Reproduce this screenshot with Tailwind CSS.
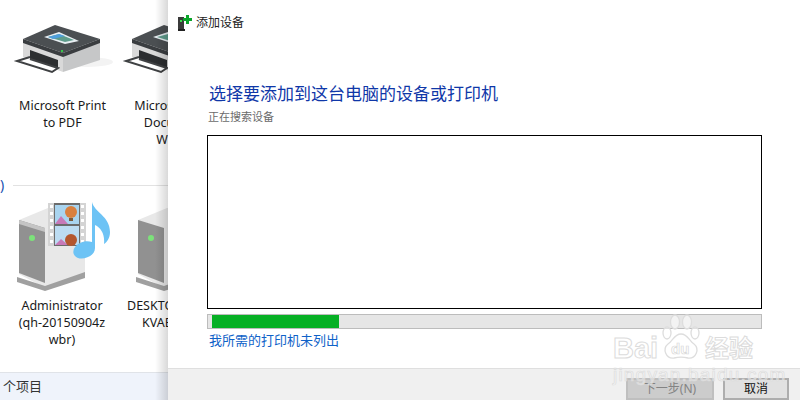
<!DOCTYPE html>
<html lang="zh-CN">
  <head>
    <meta charset="UTF-8" />
    <title>添加设备</title>
    <script src="https://cdn.jsdelivr.net/npm/@tailwindcss/browser@4"></script>
  </head>
  <body class="bg-white overflow-hidden font-['Noto_Sans','Noto_Sans_CJK_SC',sans-serif]">
    <div class="relative flex w-[800px] h-[400px] overflow-hidden">
      <!-- explorer behind the dialog -->
      <div class="relative w-[168px] h-full shrink-0 flex flex-col overflow-hidden text-[12.5px] leading-[17px] text-[#1a1a1a]">
        <div class="flex h-[168px] pt-[24px] gap-[2px] pl-[9px]">
          <div class="w-[107px] shrink-0 flex flex-col items-center text-center">
            <svg class="w-[107px] h-[50px] mb-[23px]" viewBox="0 0 107 50">
              <ellipse cx="78" cy="38" rx="26" ry="5" fill="#f3f3f3" />
              <path d="M14 15 L54 29 V48 L14 33 Z" fill="#d9d9d9" />
              <path d="M54 29 L91 15 V36 L54 48 Z" fill="#c6c7c8" />
              <path d="M14 15 L46 1 L91 15 L54 29 Z" fill="#4b4f52" />
              <path d="M14 15 L54 29 L91 15 V19 L54 33 L14 19 Z" fill="#3a3d40" />
              <path d="M35 13 L50 8 L70 17 L56 20 Z" fill="#e8eef2" />
              <path d="M39 13 L50 10 L65 16 L56 18 Z" fill="#5f9c8c" />
              <path d="M39 13 L50 10 L56 12 L44 15 Z" fill="#4f9fdc" />
              <rect x="52" y="26" width="2" height="2" fill="#35c848" />
              <path d="M21 26 L49 36 V45 L21 35 Z" fill="#2c2e30" />
              <path d="M21 33 L8 37 L43 48 L49 44 L21 35" fill="#ffffff" stroke="#3f4143" stroke-width="2" />
            </svg>
            <div>Microsoft Print<br />to PDF</div>
          </div>
          <div class="w-[107px] shrink-0 flex flex-col items-center text-center">
            <svg class="w-[107px] h-[50px] mb-[23px]" viewBox="0 0 107 50">
              <path d="M14 15 L54 29 V48 L14 33 Z" fill="#d9d9d9" />
              <path d="M14 15 L46 1 L91 15 L54 29 Z" fill="#4b4f52" />
              <path d="M14 15 L54 29 L91 15 V19 L54 33 L14 19 Z" fill="#3a3d40" />
              <path d="M35 13 L50 8 L70 17 L56 20 Z" fill="#e8eef2" />
              <path d="M39 13 L50 10 L65 16 L56 18 Z" fill="#5f9c8c" />
              <path d="M21 26 L49 36 V45 L21 35 Z" fill="#2c2e30" />
              <path d="M21 33 L8 37 L43 48 L49 44 L21 35" fill="#ffffff" stroke="#3f4143" stroke-width="2" />
            </svg>
            <div class="pl-[6px] whitespace-nowrap">Microsoft XPS<br />Document<br />Writer</div>
          </div>
        </div>

        <div class="flex items-center h-[34px] gap-[9px]">
          <span class="text-[14px] text-[#1a4fb0] leading-none">)</span>
          <div class="flex-1 h-px bg-[#e2e2e2]"></div>
        </div>

        <div class="flex h-[170px] pl-[8px] gap-[11px]">
          <div class="w-[108px] shrink-0 flex flex-col items-center text-center">
            <svg class="w-[108px] h-[92px] shrink-0" viewBox="0 0 108 92">
              <path d="M11 18 L40 6 L77 10 V72 L37 86 L11 72 Z" fill="#e8e8e8" />
              <path d="M11 18 L37 26 V81 L11 71 Z" fill="#919191" />
              <path d="M11 18 L37 26 V30 L11 22 Z" fill="#c4c4c4" />
              <path d="M9 75 L37 84 L77 70 V76 L37 89 L9 80 Z" fill="#a0a0a0" />
              <circle cx="24" cy="36" r="3" fill="#7ce27a" />
              <rect x="40" y="1" width="38" height="43" fill="#d4d4d4" />
              <path d="M42 3 h3 v3 h-3 Z M42 10 h3 v3 h-3 Z M42 17 h3 v3 h-3 Z M42 24 h3 v3 h-3 Z M42 31 h3 v3 h-3 Z M42 38 h3 v3 h-3 Z M73 3 h3 v3 h-3 Z M73 10 h3 v3 h-3 Z M73 17 h3 v3 h-3 Z M73 24 h3 v3 h-3 Z M73 31 h3 v3 h-3 Z M73 38 h3 v3 h-3 Z" fill="#ffffff" />
              <rect x="46" y="1" width="26" height="43" fill="#6c6c6c" />
              <rect x="47" y="3" width="24" height="19" fill="#a9d4ef" />
              <rect x="47" y="24" width="24" height="19" fill="#bcdcf2" />
              <path d="M47 22 L53 14 L60 22 Z M47 43 L53 37 L60 43 Z" fill="#c779b8" />
              <circle cx="63" cy="10" r="6" fill="#d9803f" />
              <path d="M61 16 h4 v3 h-4 Z" fill="#7a5a3a" />
              <circle cx="63" cy="38" r="6" fill="#b4572f" />
              <path d="M84 0 C86 10 102 14 102 30 C102 36 99 40 96 42 C97 32 93 26 87 23 V46 C87 54 76 58 70 56 C63 53 64 45 72 41 C76 39 80 39 84 40 Z" fill="#6dc3f5" />
            </svg>
            <div class="mt-[3px] w-[92px] break-all">Administrator (qh-20150904z wbr)</div>
          </div>
          <div class="w-[108px] shrink-0 flex flex-col items-center">
            <svg class="w-[108px] h-[92px] shrink-0" viewBox="0 0 108 92">
              <path d="M11 18 L40 6 L77 10 V72 L37 86 L11 72 Z" fill="#e8e8e8" />
              <path d="M11 18 L37 26 V81 L11 71 Z" fill="#919191" />
              <path d="M9 75 L37 84 L77 70 V76 L37 89 L9 80 Z" fill="#a0a0a0" />
              <circle cx="24" cy="36" r="3" fill="#7ce27a" />
            </svg>
            <div class="mt-[3px] w-full whitespace-nowrap">DESKTOP-<br /><span class="ml-[15px]">KVAB</span></div>
          </div>
        </div>

        <div class="h-[28px] mt-auto bg-[#eff3fb] border-t border-[#e0e3e8] pl-[3px] text-[13px] leading-[26px] text-[#333]">个项目</div>
        <div class="absolute inset-y-0 right-0 w-[13px] bg-gradient-to-r from-transparent to-black/15"></div>
      </div>

      <!-- dialog -->
      <div class="flex-1 h-full flex flex-col bg-white">
        <div class="flex items-center h-[45px] pl-[10px] gap-[4px]">
          <svg class="w-[14px] h-[16px]" viewBox="0 0 14 16">
            <rect x="0" y="2" width="6" height="12" fill="#3a3a3a" />
            <rect x="0" y="14" width="7" height="2" fill="#222" />
            <rect x="2" y="5" width="2" height="2" fill="#3ddc4c" />
            <path d="M8 0 H11 V3 H14 V6 H11 V9 H8 V6 H5 V3 H8 Z" fill="#0aa52a" />
          </svg>
          <span class="text-[12px] text-[#222]">添加设备</span>
        </div>

        <div class="flex-1 flex flex-col pl-[39px] pr-[38px]">
          <h1 class="ml-[2px] mt-[37px] text-[17px] leading-[24px] text-[#0f37a8]">选择要添加到这台电脑的设备或打印机</h1>
          <p class="mt-[3px] ml-px text-[11px] leading-[16px] text-[#6b6b6b]">正在搜索设备</p>
          <div class="mt-[10px] h-[174px] border border-black bg-white"></div>
          <div class="mt-[5px] h-[15px] border border-[#bcbcbc] bg-[#e6e6e6] pl-[4px]">
            <div class="h-full w-[127px] bg-[#06b025]"></div>
          </div>
          <a class="mt-[2px] ml-[2px] text-[13px] leading-[18px] text-[#0f62c8]">我所需的打印机未列出</a>
        </div>

        <div class="h-[32px] flex justify-end gap-[9px] pt-[9px] pr-[11px] bg-[#f0f0f0] border-t border-[#dfdfdf]">
          <button class="w-[88px] h-[22px] bg-[#cccccc] border-2 border-[#bfbfbf] text-[12px] leading-[16px] text-[#838383]">下一步(N)</button>
          <button class="w-[66px] h-[22px] bg-[#e1e1e1] border-2 border-[#adadad] text-[12px] leading-[16px] text-[#111]">取消</button>
        </div>
      </div>

      <!-- watermark -->
      <div class="absolute left-[612px] top-[312px] w-[150px] h-[76px] pointer-events-none">
        <svg class="absolute left-[50px] top-[2px] w-[38px] h-[46px]" viewBox="0 0 38 46" fill="#ffffff" fill-opacity="0.5" stroke="#dddddd" stroke-width="1.3">
          <ellipse cx="13" cy="8" rx="4.5" ry="7" />
          <ellipse cx="25" cy="8" rx="4.5" ry="7" />
          <ellipse cx="5" cy="19" rx="4" ry="6" />
          <ellipse cx="33" cy="19" rx="4" ry="6" />
          <path d="M19 20 C26 20 27 27 32 30 C38 35 34 45 26 44 C22 43 16 43 12 44 C4 45 0 35 6 30 C11 27 12 20 19 20 Z" />
        </svg>
        <div class="absolute left-[1px] top-[19px] font-['Liberation_Sans',sans-serif] text-[29px] leading-[34px] font-bold text-white/50 [-webkit-text-stroke:1px_#dcdcdc]">Bai</div>
        <div class="absolute left-[59px] top-[28px] font-['Liberation_Sans',sans-serif] text-[15px] leading-[18px] font-bold text-white/50 [-webkit-text-stroke:0.7px_#d8d8d8]">du</div>
        <div class="absolute left-[93px] top-[21px] text-[24px] leading-[30px] font-bold text-white/50 [-webkit-text-stroke:1px_#dcdcdc]">经验</div>
        <div class="absolute left-[1px] top-[52px] font-['Liberation_Sans',sans-serif] text-[19px] leading-[22px] tracking-[1.2px] text-white/40 [-webkit-text-stroke:0.7px_#dcdcdc]">jingyan.baidu.com</div>
      </div>
    </div>
  </body>
</html>
